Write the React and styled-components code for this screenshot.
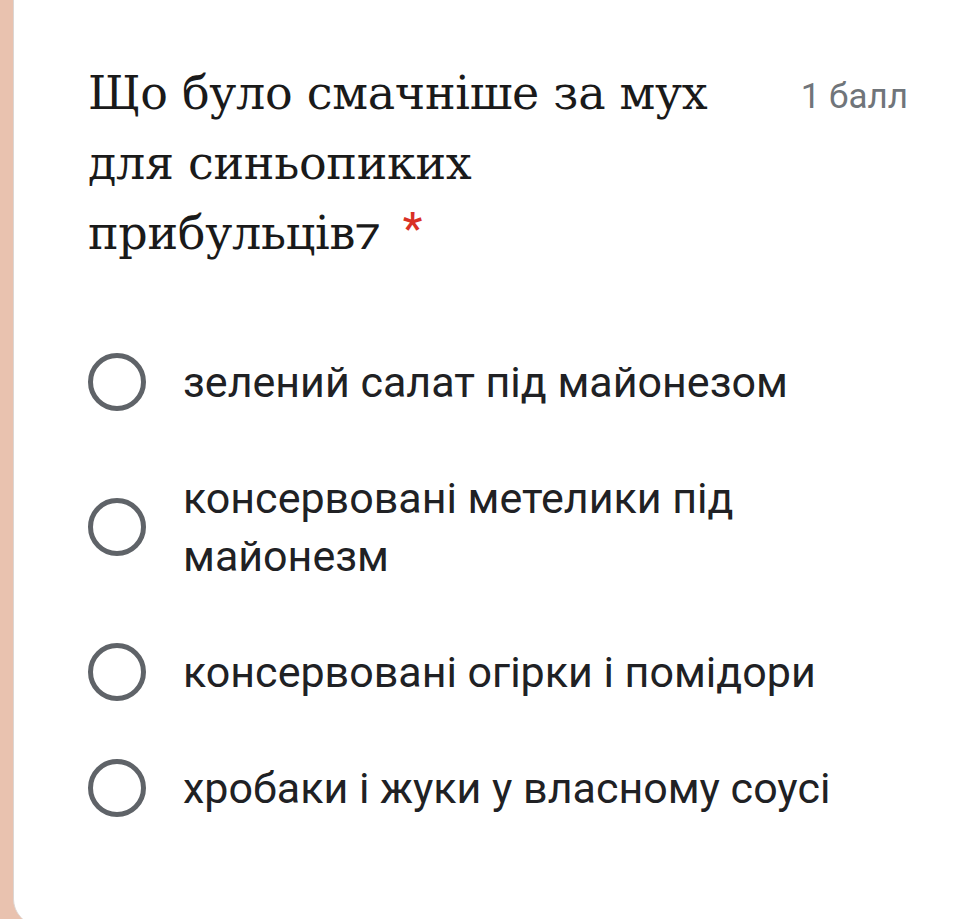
import React from "react";
import styled, { createGlobalStyle } from "styled-components";

const Global = createGlobalStyle`
  html, body { margin: 0; padding: 0; background: #e9c2af; overflow: hidden; }
  #root { height: 919px; }
`;

const Page = styled.div`
  display: flex;
  height: 919px;
  padding-left: 13px;
  box-sizing: border-box;
  background: #e9c2af;
`;

const Card = styled.div`
  flex: 1;
  height: 925px;
  flex-shrink: 0;
  background: #ffffff;
  border-left: 1px solid #dcd6d3;
  border-bottom-left-radius: 26px;
  padding: 58px 63px 0 74px;
  box-sizing: border-box;
`;

const Header = styled.div`
  display: flex;
  justify-content: space-between;
  align-items: flex-start;
`;

const Title = styled.h1`
  margin: 0;
  max-width: 670px;
  font-family: "DejaVu Serif", "Liberation Serif", serif;
  font-weight: 400;
  font-size: 46px;
  line-height: 70px;
  color: #1a1a1a;
  letter-spacing: -0.3px;
`;

const Star = styled.span`
  color: #d93025;
  font-family: "Roboto", sans-serif;
  font-weight: 500;
  font-size: 44px;
  margin-left: 22px;
  vertical-align: top;
  line-height: 62px;
`;

const Points = styled.div`
  font-family: "Roboto", sans-serif;
  font-size: 35px;
  line-height: 40px;
  margin-top: 19px;
  color: #70757a;
  white-space: nowrap;
`;

const List = styled.div`
  display: flex;
  flex-direction: column;
  margin-top: 56px;
`;

const Option = styled.label`
  display: flex;
  align-items: center;
  gap: 37px;
  padding: 29px 0;
`;

const Radio = styled.span`
  flex: none;
  width: 58px;
  height: 58px;
  border-radius: 50%;
  border: 5px solid #5f6368;
  box-sizing: border-box;
`;

const OptionText = styled.span`
  font-family: "Roboto", sans-serif;
  font-size: 43px;
  line-height: 58px;
  color: #202124;
  white-space: pre-line;
`;

const options = [
  "зелений салат під майонезом",
  "консервовані метелики під\nмайонезм",
  "консервовані огірки і помідори",
  "хробаки і жуки у власному соусі",
];

export default function App() {
  return (
    <>
      <Global />
      <Page>
        <Card>
          <Header>
            <Title>
              Що було смачніше за мух для синьопиких прибульців⁊
              <Star>*</Star>
            </Title>
            <Points>1 балл</Points>
          </Header>
          <List>
            {options.map((o) => (
              <Option key={o}>
                <Radio />
                <OptionText>{o}</OptionText>
              </Option>
            ))}
          </List>
        </Card>
      </Page>
    </>
  );
}
